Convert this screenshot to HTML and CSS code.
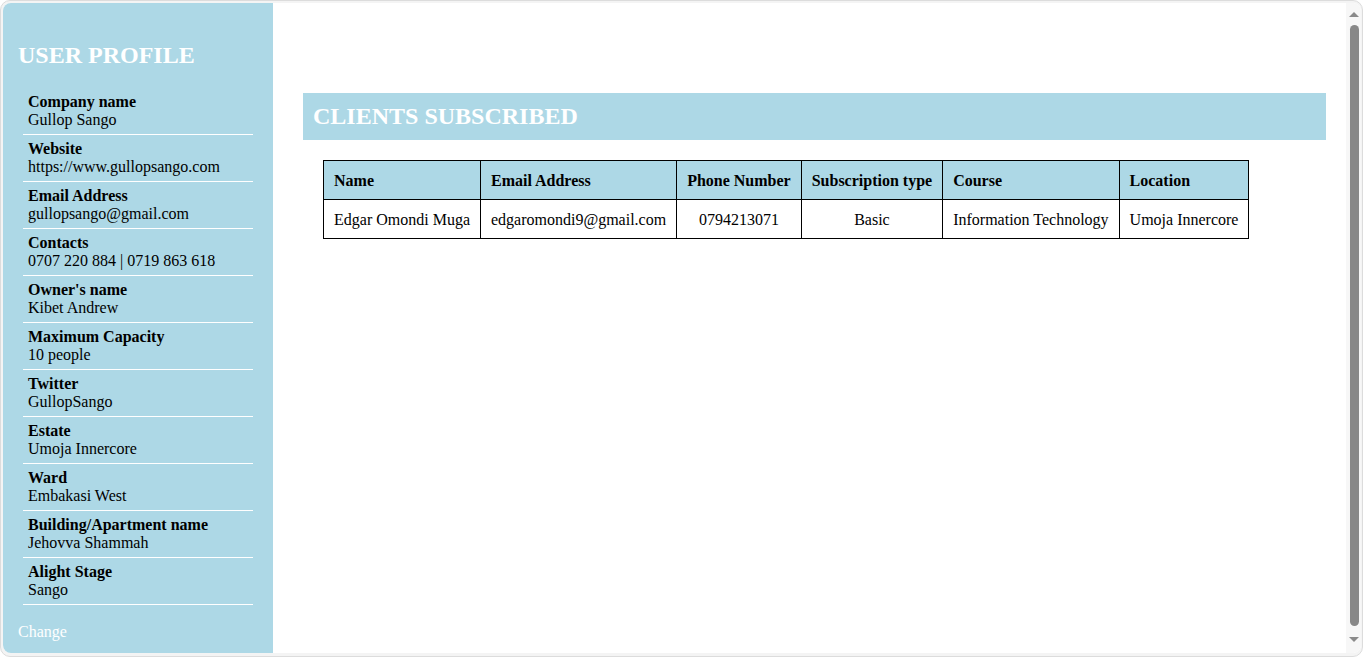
FILE: index.html
```html
<!DOCTYPE html>
<html lang="en">
<head>
<meta charset="utf-8">
<title>User Profile</title>
<link rel="stylesheet" href="styles.css">
</head>
<body>
<div class="frame">
  <div class="window">
    <aside class="sidebar">
      <h2 class="side-title">USER PROFILE</h2>
      <ul class="info-list">
        <li class="info-item"><b>Company name</b><span>Gullop Sango</span></li>
        <li class="info-item"><b>Website</b><span>https://www.gullopsango.com</span></li>
        <li class="info-item"><b>Email Address</b><span>gullopsango@gmail.com</span></li>
        <li class="info-item"><b>Contacts</b><span>0707 220 884 | 0719 863 618</span></li>
        <li class="info-item"><b>Owner's name</b><span>Kibet Andrew</span></li>
        <li class="info-item"><b>Maximum Capacity</b><span>10 people</span></li>
        <li class="info-item"><b>Twitter</b><span>GullopSango</span></li>
        <li class="info-item"><b>Estate</b><span>Umoja Innercore</span></li>
        <li class="info-item"><b>Ward</b><span>Embakasi West</span></li>
        <li class="info-item"><b>Building/Apartment name</b><span>Jehovva Shammah</span></li>
        <li class="info-item"><b>Alight Stage</b><span>Sango</span></li>
      </ul>
      <a class="change-link" href="#">Change</a>
    </aside>
    <main class="main">
      <h2 class="section-title">CLIENTS SUBSCRIBED</h2>
      <table class="clients">
        <thead>
          <tr>
            <th>Name</th>
            <th>Email Address</th>
            <th class="center">Phone Number</th>
            <th class="center">Subscription type</th>
            <th>Course</th>
            <th>Location</th>
          </tr>
        </thead>
        <tbody>
          <tr>
            <td>Edgar Omondi Muga</td>
            <td>edgaromondi9@gmail.com</td>
            <td class="center">0794213071</td>
            <td class="center">Basic</td>
            <td>Information Technology</td>
            <td>Umoja Innercore</td>
          </tr>
        </tbody>
      </table>
    </main>
    <div class="scrollbar">
      <div class="arrow arrow-up"></div>
      <div class="thumb"></div>
      <div class="arrow arrow-down"></div>
    </div>
  </div>
</div>
</body>
</html>
```

FILE: styles.css
```css
html, body {
  margin: 0;
  padding: 0;
  background: #ffffff;
}

body {
  font-family: "Liberation Serif", "Times New Roman", serif;
  font-size: 16px;
  color: #000;
}

.frame {
  box-sizing: border-box;
  width: 1363px;
  height: 657px;
  border: 1px solid #dcdcdc;
  border-radius: 10px;
  padding: 2px 1px 3px 2px;
  background: #f4f4f4;
}

.window {
  display: flex;
  height: 100%;
  border-radius: 8px;
  overflow: hidden;
  background: #ffffff;
}

.sidebar {
  box-sizing: border-box;
  width: 270px;
  flex: none;
  background: #add8e6;
  padding: 19px 15px 0 15px;
  display: flex;
  flex-direction: column;
}

.side-title {
  margin: 20px 0 19px 0;
  font-size: 24px;
  line-height: 27px;
  font-weight: bold;
  color: #ffffff;
}

.info-list {
  list-style: none;
  margin: 0 0 0 5px;
  padding: 0;
  width: 230px;
}

.info-item {
  display: flex;
  flex-direction: column;
  padding: 5px 5px;
  line-height: 18px;
  border-bottom: 1px solid #ffffff;
}

.info-item b {
  font-weight: bold;
}

.change-link {
  margin-top: 18px;
  color: #ffffff;
  text-decoration: none;
  line-height: 18px;
}

.main {
  flex: 1;
  padding: 90px 20px 0 30px;
}

.section-title {
  margin: 0;
  background: #add8e6;
  color: #ffffff;
  font-size: 24px;
  line-height: 27px;
  font-weight: bold;
  padding: 10px 10px;
}

.clients {
  margin: 20px 0 0 20px;
  border-collapse: collapse;
}

.clients th,
.clients td {
  border: 1px solid #000;
  padding: 11px 10px 9px 10px;
  line-height: 18px;
  font-size: 16px;
  text-align: left;
  white-space: nowrap;
}

.clients td {
  padding: 11px 10px 9px 10px;
}

.clients th {
  background: #add8e6;
  font-weight: bold;
}

.clients .center {
  text-align: center;
}

.scrollbar {
  width: 15px;
  flex: none;
  background: #f7f7f7;
  display: flex;
  flex-direction: column;
  align-items: center;
  padding: 9px 0 11px 0;
  box-sizing: border-box;
}

.arrow {
  width: 0;
  height: 0;
  border-left: 5px solid transparent;
  border-right: 5px solid transparent;
}

.arrow-up {
  border-bottom: 5px solid #8a8a8a;
}

.arrow-down {
  border-top: 5px solid #8a8a8a;
}

.thumb {
  width: 9px;
  flex: 1;
  margin: 8px 0 11px 1px;
  background: #888888;
  border-radius: 5px;
}
```
